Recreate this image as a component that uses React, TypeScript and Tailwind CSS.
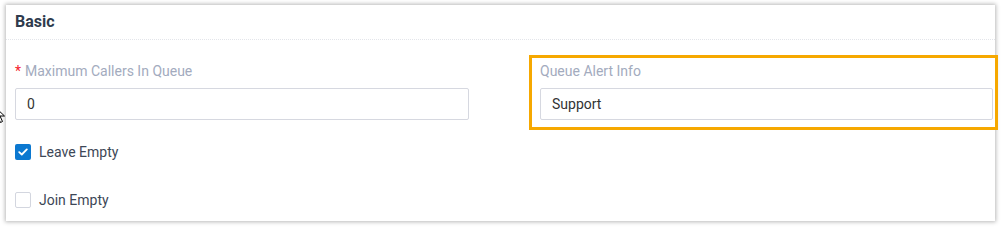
import React from "react";

function Checkbox({ checked }: { checked: boolean }) {
  if (checked) {
    return (
      <span className="flex h-4 w-4 items-center justify-center rounded-[2px] bg-[#0b78d0]">
        <svg width="10" height="8" viewBox="0 0 10 8" fill="none">
          <path d="M1.2 4.1 3.8 6.5 8.8 1.4" stroke="#fff" strokeWidth="1.8" strokeLinecap="round" strokeLinejoin="round" />
        </svg>
      </span>
    );
  }
  return <span className="block h-4 w-4 rounded-[2px] border border-[#d3d6df] bg-white" />;
}

export default function App() {
  return (
    <div className="relative h-[228px] w-[1002px] bg-white pl-[6px] pt-[5px] font-['Roboto',sans-serif]">
      {/* mouse cursor peeking in on the left */}
      <svg className="absolute left-[-6px] top-[106px]" width="12" height="18" viewBox="0 0 12 18">
        <path d="M1 1v13l3-3 2.5 5.5 2-1L6 10h4.5z" fill="#fff" stroke="#000" strokeWidth="1" />
      </svg>

      <div className="h-[216px] w-[989px] bg-white shadow-[0_0_4px_1px_rgba(0,0,0,0.28)]">
        <div className="flex h-[35px] items-center border-b border-dotted border-[#e3e5ea] px-[9px]">
          <span className="text-[16px] font-bold text-[#2f3b4d]">Basic</span>
        </div>

        <div className="grid grid-cols-[454px_453px] gap-x-[71px] px-[9px] pt-[21px]">
          <div>
            <div className="flex h-5 items-center text-[14px] text-[#a3abbe]">
              <span className="mr-[4px] text-[#f5222d]">*</span>
              Maximum Callers In Queue
            </div>
            <div className="mt-[7px] flex h-[32px] items-center rounded-[2px] border border-[#d6d8e0] px-[11px] text-[14px] text-[#333]">
              0
            </div>
          </div>

          <div className="relative">
            <div className="flex h-5 items-center text-[14px] text-[#a3abbe]">Queue Alert Info</div>
            <div className="mt-[7px] flex h-[32px] items-center rounded-[2px] border border-[#d6d8e0] px-[11px] text-[14px] text-[#333]">
              Support
            </div>
            <div className="pointer-events-none absolute -bottom-[10px] -left-[11px] -right-[5px] -top-[6px] border-[3px] border-[#f6a800]" />
          </div>
        </div>

        <div className="flex flex-col gap-[28px] px-[9px] pt-[22px]">
          <label className="flex h-5 items-center gap-[8px] text-[14px] text-[#3d4756]">
            <Checkbox checked />
            Leave Empty
          </label>
          <label className="flex h-5 items-center gap-[8px] text-[14px] text-[#3d4756]">
            <Checkbox checked={false} />
            Join Empty
          </label>
        </div>
      </div>
    </div>
  );
}
